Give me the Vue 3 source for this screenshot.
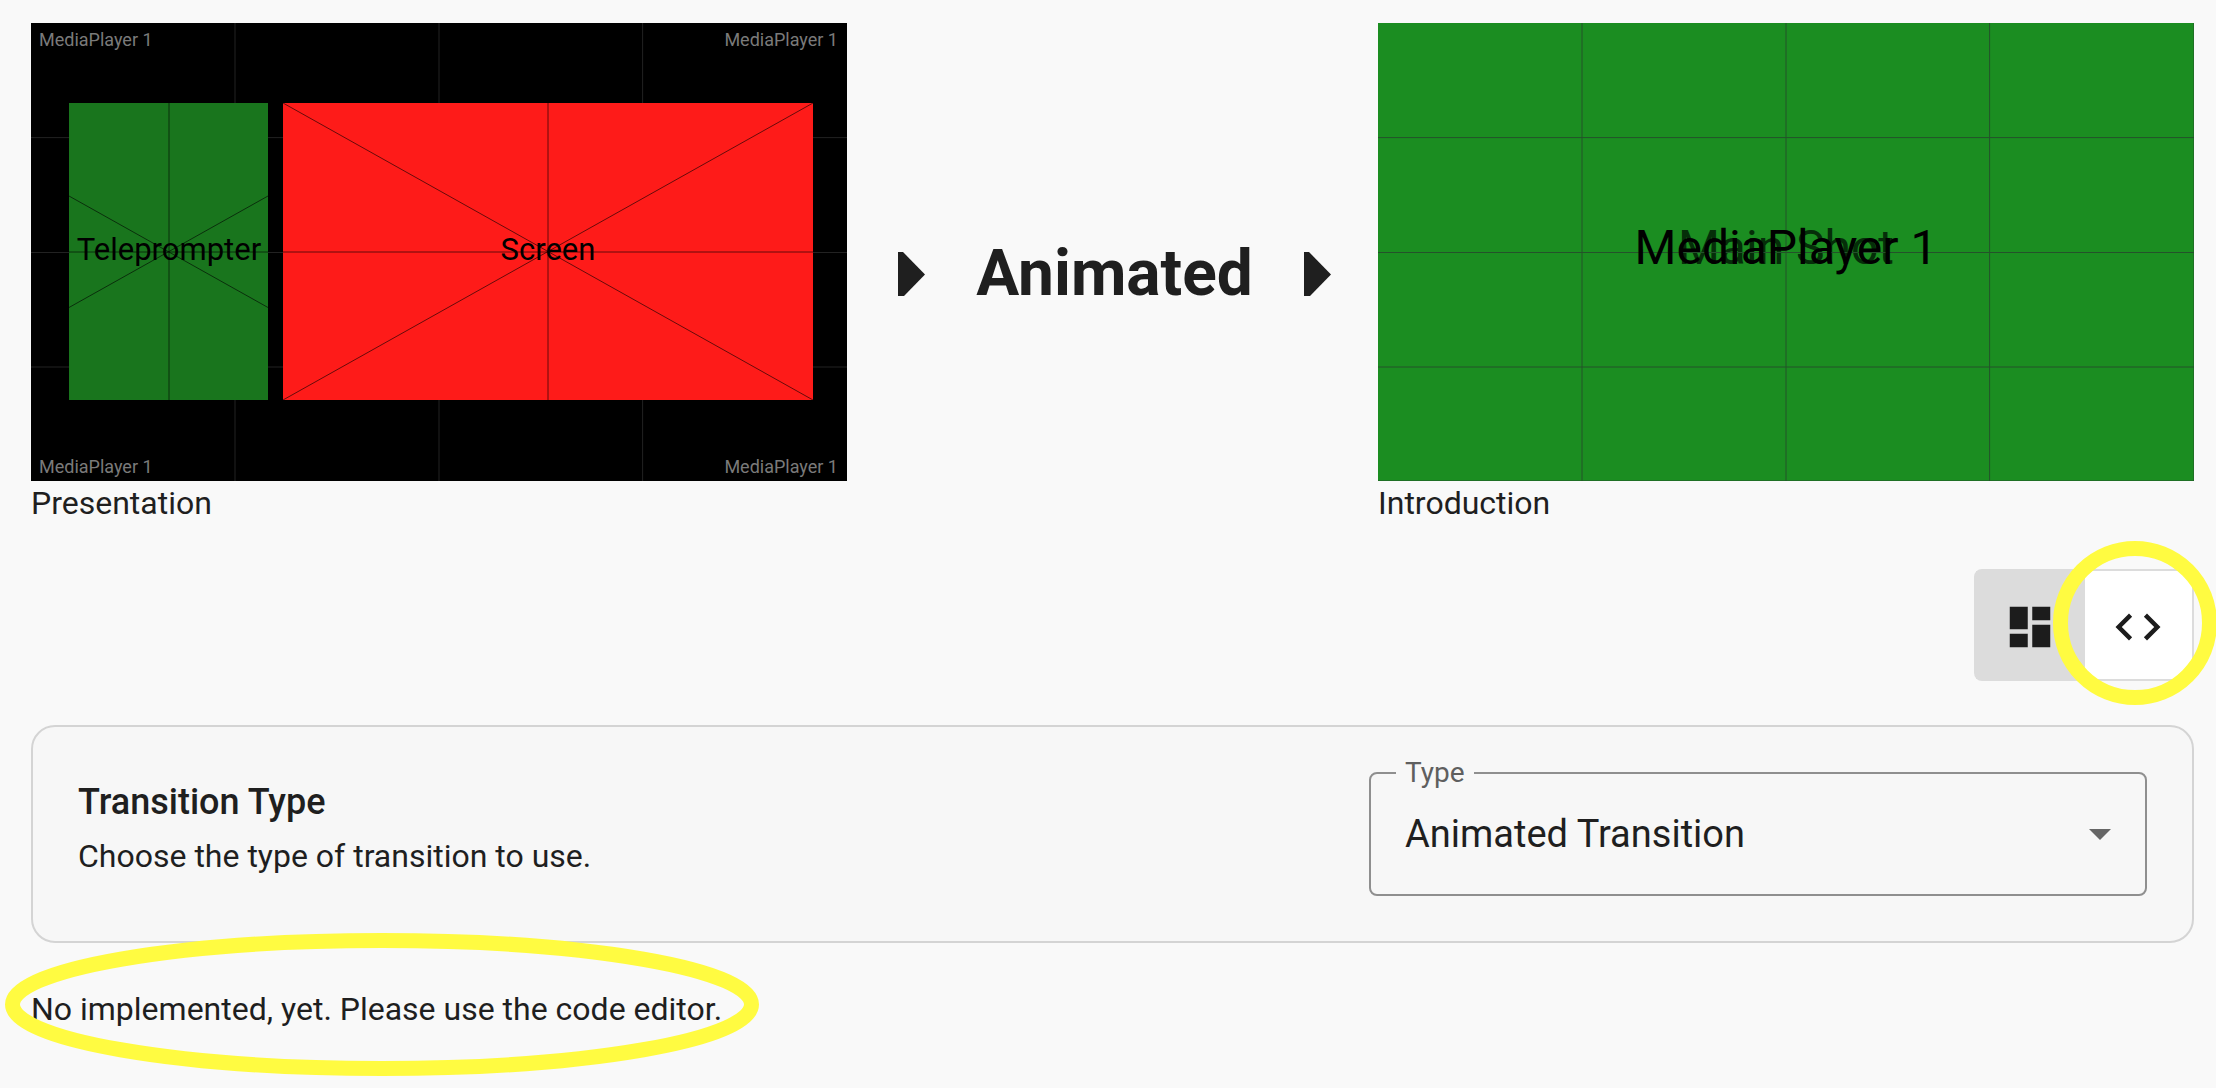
<script setup>
import { ref } from 'vue'

const view = ref('code')
const type = ref('animated')
const corners = [
  { x: 8, y: 23, anchor: 'start' },
  { x: 807, y: 23, anchor: 'end' },
  { x: 8, y: 450, anchor: 'start' },
  { x: 807, y: 450, anchor: 'end' },
]
</script>

<template>
  <main class="page">
    <section class="flow">
      <figure class="scene">
        <svg class="preview" viewBox="0 0 816 458" role="img" aria-label="Presentation preview">
          <rect width="816" height="458" fill="#000" />
          <path class="grid-dark" d="M204 0V458M408 0V458M611.6 0V458M0 114.6H816M0 229.5H816M0 344H816" />
          <text
            v-for="(c, i) in corners"
            :key="i"
            class="corner"
            :x="c.x"
            :y="c.y"
            :text-anchor="c.anchor"
          >MediaPlayer 1</text>
          <rect x="38" y="80" width="199" height="297" fill="#19751d" />
          <path class="guide" d="M138 80V377M38 229H237M38 173L237 284.5M38 284.5L237 173" />
          <rect x="252" y="80" width="530" height="297" fill="#fe1b19" />
          <path class="guide" d="M517 80V377M252 229H782M252 80L782 377M252 377L782 80" />
          <text class="label" x="138" y="237">Teleprompter</text>
          <text class="label" x="517" y="237">Screen</text>
        </svg>
        <figcaption>Presentation</figcaption>
      </figure>

      <div class="transition">
        <svg class="arrow" viewBox="0 0 27 44" aria-hidden="true"><path d="M0 0H5L27 22.5L6 44H0Z" /></svg>
        <h1>Animated</h1>
        <svg class="arrow" viewBox="0 0 27 44" aria-hidden="true"><path d="M0 0H5L27 22.5L6 44H0Z" /></svg>
      </div>

      <figure class="scene">
        <svg class="preview" viewBox="0 0 816 458" role="img" aria-label="Introduction preview">
          <rect width="816" height="458" fill="#1b8d21" />
          <text class="title under" x="408" y="241">Main Shot</text>
          <path class="grid-light" d="M204 0V458M408 0V458M611.6 0V458M0 114.6H816M0 229.5H816M0 344H816M816 0V458H0" />
          <text class="title" x="408" y="241">MediaPlayer 1</text>
        </svg>
        <figcaption>Introduction</figcaption>
      </figure>
    </section>

    <div class="toolbar">
      <div class="toggle" role="group" aria-label="Editor view">
        <button type="button" aria-label="Visual editor" :aria-pressed="view === 'visual'" class="off" @click="view = 'visual'">
          <svg viewBox="0 0 24 24"><path d="M3 13h8V3H3v10zm0 8h8v-6H3v6zm10 0h8V11h-8v10zm0-18v6h8V3h-8z" /></svg>
        </button>
        <button type="button" aria-label="Code editor" :aria-pressed="view === 'code'" @click="view = 'code'">
          <svg viewBox="0 0 24 24"><path d="M9.4 16.6L4.8 12l4.6-4.6L8 6l-6 6 6 6 1.4-1.4zm5.2 0l4.6-4.6-4.6-4.6L16 6l6 6-6 6-1.4-1.4z" /></svg>
        </button>
        <svg class="mark circle" viewBox="0 0 164 164" aria-hidden="true">
          <circle cx="82" cy="82" r="74.5" />
        </svg>
      </div>
    </div>

    <section class="card">
      <div class="about">
        <h2>Transition Type</h2>
        <p>Choose the type of transition to use.</p>
      </div>
      <div class="field">
        <label for="transition-type">Type</label>
        <select id="transition-type" v-model="type">
          <option value="animated">Animated Transition</option>
          <option value="cut">Cut Transition</option>
        </select>
        <svg class="caret" viewBox="0 0 22 11" aria-hidden="true"><path d="M0 0H22L11 11Z" /></svg>
      </div>
    </section>

    <p class="note">
      No implemented, yet. Please use the code editor.
      <svg class="mark ellipse" viewBox="0 0 754 143" aria-hidden="true">
        <ellipse cx="377" cy="71.5" rx="369.5" ry="64" />
      </svg>
    </p>
  </main>
</template>

<style>
body {
  margin: 0;
  background: #f9f9f9;
}
</style>

<style scoped>
.page {
  box-sizing: border-box;
  min-height: 100vh;
  padding: 23px 22px 44px 31px;
  display: flex;
  flex-direction: column;
  gap: 44px;
  overflow: hidden;
  color: #1f1f1f;
  font-family: Roboto, "Liberation Sans", sans-serif;
  font-size: 32px;
  line-height: 44px;
}
h1,
h2,
p,
figure {
  margin: 0;
}
.flow {
  display: grid;
  grid-template-columns: 816fr 531fr 816fr;
  align-items: center;
}
.preview {
  display: block;
  width: 100%;
  overflow: hidden;
}
.preview path {
  fill: none;
  stroke-width: 1;
}
.grid-dark {
  stroke: #222;
}
.grid-light {
  stroke: #24522a;
}
.guide {
  stroke: rgba(0, 0, 0, 0.6);
}
.corner {
  font-size: 18px;
  fill: #7a7a7a;
}
.label {
  font-size: 31px;
  text-anchor: middle;
}
.title {
  font-size: 48px;
  text-anchor: middle;
}
.under {
  fill: #052e09;
}
.transition {
  display: flex;
  align-items: center;
  justify-content: center;
  gap: 51px;
  padding-left: 4px;
}
.transition h1 {
  font-size: 64px;
  font-weight: 700;
  line-height: 76px;
}
.arrow {
  width: 27px;
  height: 44px;
  fill: #1f1f1f;
}
.toolbar {
  display: flex;
  justify-content: flex-end;
}
.toggle {
  position: relative;
  display: flex;
  box-sizing: border-box;
  height: 112px;
  border: 2px solid #dcdcdc;
  border-radius: 8px;
}
.toggle button {
  display: flex;
  align-items: center;
  justify-content: center;
  width: 107px;
  padding: 4px 2px 0 0;
  border: 0;
  border-radius: 0 6px 6px 0;
  background: #fff;
}
.toggle .off {
  width: 109px;
  border-radius: 0;
  background: #dcdcdc;
}
.toggle button svg {
  width: 54px;
  height: 54px;
  fill: #1c1c1c;
}
.mark {
  position: absolute;
  fill: none;
  stroke: #fffb41;
  stroke-width: 15;
  pointer-events: none;
}
.circle {
  width: 164px;
  height: 164px;
  top: -30px;
  right: -25px;
}
.card {
  display: flex;
  align-items: center;
  justify-content: space-between;
  gap: 45px;
  padding: 45px;
  border: 2px solid #d4d4d4;
  border-radius: 24px;
  background: #f7f7f7;
}
.about {
  align-self: flex-start;
}
.about h2 {
  font-size: 36px;
  font-weight: 500;
  line-height: 60px;
}
.about p {
  line-height: 48px;
}
.field {
  position: relative;
  width: 778px;
}
.field select {
  display: block;
  box-sizing: border-box;
  width: 100%;
  height: 124px;
  padding: 0 72px 0 34px;
  border: 2px solid #8f8f8f;
  border-radius: 8px;
  appearance: none;
  background: transparent;
  color: #1f1f1f;
  font-family: inherit;
  font-size: 38px;
}
.field label {
  position: absolute;
  top: -14px;
  left: 27px;
  padding: 0 9px;
  background: #f7f7f7;
  color: #5f5f5f;
  font-size: 28px;
  line-height: 30px;
}
.caret {
  position: absolute;
  top: 57px;
  right: 36px;
  width: 22px;
  height: 11px;
  fill: #666;
  pointer-events: none;
}
.note {
  position: relative;
  align-self: flex-start;
}
.ellipse {
  top: -54px;
  left: -26px;
  width: 754px;
  height: 143px;
}
</style>
